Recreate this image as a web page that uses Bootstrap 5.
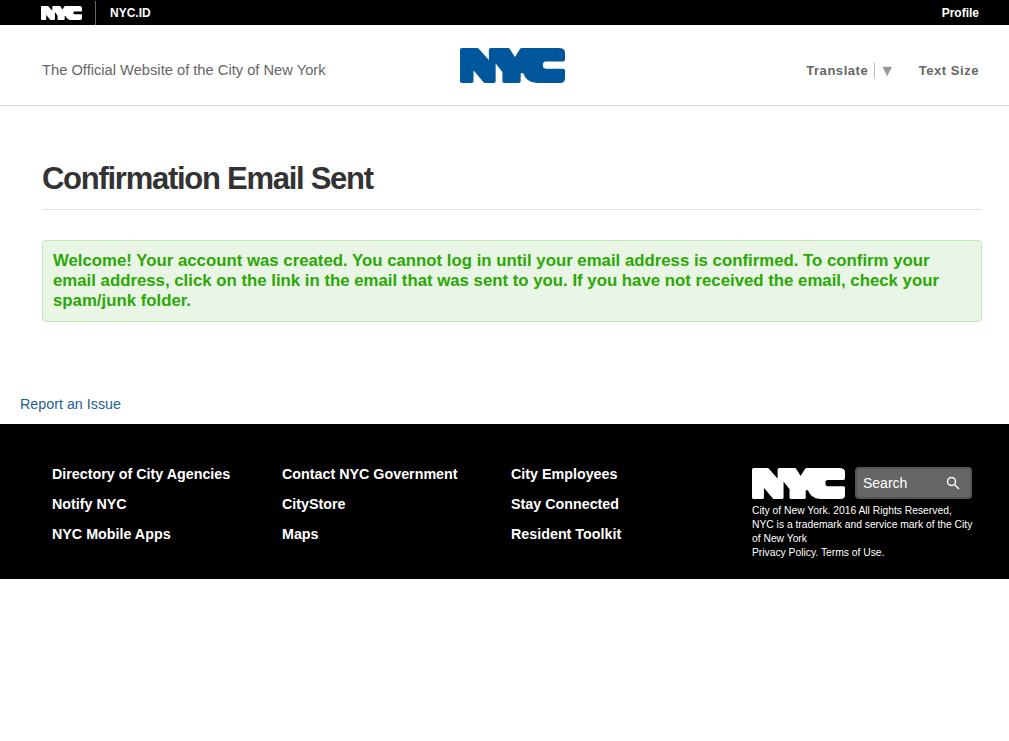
<!DOCTYPE html>
<html lang="en">
<head>
  <meta charset="UTF-8" />
  <meta name="viewport" content="width=device-width, initial-scale=1" />
  <title>Confirmation Email Sent</title>
  <link href="https://cdn.jsdelivr.net/npm/bootstrap@5.3.0/dist/css/bootstrap.min.css" rel="stylesheet" />
  <style>
    body {
      background: #fff;
      color: #333;
      font-family: "Liberation Sans", Arial, sans-serif;
      font-size: 14px;
    }

    .topbar {
      background: #000;
      height: 25px;
      padding-left: 41px;
      padding-right: 30px;
    }

    .topbar a {
      color: #fff;
      font-size: 12px;
      font-weight: 700;
      text-decoration: none;
    }

    .topbar-logo {
      width: 41px;
      height: 14px;
      color: #fff;
    }

    .topbar-sep {
      width: 1px;
      height: 24px;
      background: #666;
      margin: 0 14px 0 13px;
    }

    .site-header {
      height: 81px;
      padding: 11px 30px 0 42px;
      border-bottom: 1px solid #d9d9d9;
      position: relative;
    }

    .site-tagline {
      color: #666;
      font-size: 14.7px;
    }

    .site-logo {
      width: 105px;
      height: 35px;
      color: #00579c;
      position: absolute;
      left: 460px;
      top: 23px;
    }

    .tools {
      color: #666;
      font-size: 13px;
      font-weight: 700;
      letter-spacing: .55px;
    }

    .tools-sep {
      width: 1px;
      height: 16px;
      background: #bbb;
      margin: 0 4px 0 6px;
    }

    .tools-arrow {
      color: #999;
      font-size: 16px;
      line-height: 16px;
      margin-right: 23px;
    }

    .page-main {
      padding: 0 27px 0 42px;
    }

    .page-title {
      font-size: 31px;
      font-weight: 700;
      letter-spacing: -1.27px;
      color: #333;
      line-height: 36px;
      margin: 55px 0 0;
      padding-bottom: 12px;
      border-bottom: 1px solid #e3e3e3;
    }

    .alert.confirm-note {
      background: #e9f5e5;
      border: 1px solid #bfe6b5;
      border-radius: 4px;
      color: #2ba805;
      font-size: 16.8px;
      font-weight: 700;
      line-height: 20px;
      margin: 30px 0 0;
      padding: 10px;
    }

    .report-link {
      color: #25618f;
      font-size: 14.3px;
      text-decoration: none;
      display: block;
      line-height: 20px;
      margin: 72px 0 0 20px;
    }

    .site-footer {
      background: #000;
      height: 155px;
      margin-top: 10px;
      padding: 40px 35px 0 52px;
    }

    .foot-links {
      display: grid;
      grid-template-columns: 230px 229px 241px;
      grid-auto-rows: 20px;
      align-content: start;
      row-gap: 10px;
    }

    .foot-links a {
      color: #fff;
      font-size: 14.3px;
      font-weight: 700;
      line-height: 20px;
      text-decoration: none;
    }

    .foot-side {
      width: 222px;
      margin-top: 3px;
    }

    .foot-logo {
      width: 93px;
      height: 31px;
      color: #fff;
    }

    .foot-search {
      width: 117px;
      height: 32px;
      margin-left: 10px;
      background: #666;
      border: 2px solid #555;
      border-radius: 4px;
      color: #fff;
      padding: 0 10px 0 6px;
    }

    .foot-legal {
      color: #fff;
      font-size: 10.3px;
      line-height: 14px;
      margin: 5px 0 0;
    }

    .foot-legal a {
      color: #fff;
      text-decoration: none;
    }
  </style>
</head>
<body>
  <svg width="0" height="0" class="d-block">
    <symbol id="nyc" viewBox="-2 -2 109 39" preserveAspectRatio="none">
      <path fill="currentColor" stroke="currentColor" stroke-width="4" stroke-linejoin="round" d="M0 0H16L30 17V0H48L55 12L62 0H100Q105 0 105 3V11H87Q82 11 82 17Q82 23 87 23H105V32Q105 35 102 35H78Q68 35 65 24L59 24V35H44V24L33 9V35H24L10 17V35H0Z" />
    </symbol>
  </svg>

  <div class="topbar d-flex align-items-center">
    <svg class="topbar-logo"><use href="#nyc" /></svg>
    <span class="topbar-sep"></span>
    <a href="#">NYC.ID</a>
    <a href="#" class="ms-auto">Profile</a>
  </div>

  <header class="site-header d-flex align-items-center">
    <span class="site-tagline">The Official Website of the City of New York</span>
    <svg class="site-logo"><use href="#nyc" /></svg>
    <div class="tools ms-auto d-flex align-items-center">
      <span>Translate</span>
      <span class="tools-sep"></span>
      <span class="tools-arrow">▼</span>
      <span>Text Size</span>
    </div>
  </header>

  <main class="page-main">
    <h1 class="page-title">Confirmation Email Sent</h1>
    <div class="alert confirm-note" role="alert">Welcome! Your account was created. You cannot log in until your email address is confirmed. To confirm your email address, click on the link in the email that was sent to you. If you have not received the email, check your spam/junk folder.</div>
  </main>

  <a href="#" class="report-link">Report an Issue</a>

  <footer class="site-footer d-flex justify-content-between">
    <div class="foot-links">
      <a href="#">Directory of City Agencies</a>
      <a href="#">Contact NYC Government</a>
      <a href="#">City Employees</a>
      <a href="#">Notify NYC</a>
      <a href="#">CityStore</a>
      <a href="#">Stay Connected</a>
      <a href="#">NYC Mobile Apps</a>
      <a href="#">Maps</a>
      <a href="#">Resident Toolkit</a>
    </div>
    <div class="foot-side">
      <div class="d-flex align-items-center">
        <svg class="foot-logo"><use href="#nyc" /></svg>
        <div class="foot-search d-flex align-items-center justify-content-between">
          <span>Search</span>
          <svg width="14" height="14" viewBox="0 0 14 14" fill="none" stroke="#fff" stroke-width="1.5">
            <circle cx="5.5" cy="5.5" r="4" />
            <path d="M8.5 8.5L13 13" />
          </svg>
        </div>
      </div>
      <p class="foot-legal">City of New York. 2016 All Rights Reserved,<br />NYC is a trademark and service mark of the City of New York<br /><a href="#">Privacy Policy.</a> <a href="#">Terms of Use.</a></p>
    </div>
  </footer>
  <script src="https://cdn.jsdelivr.net/npm/bootstrap@5.3.0/dist/js/bootstrap.bundle.min.js"></script>
</body>
</html>
